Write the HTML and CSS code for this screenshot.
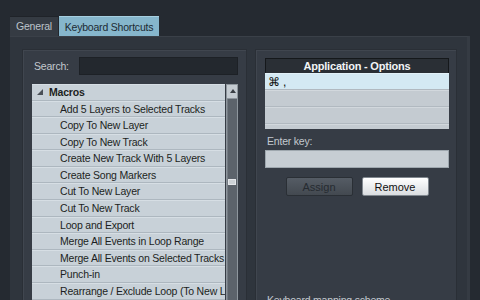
FILE: index.html
```html
<!DOCTYPE html>
<html lang="en">
<head>
    <meta charset="UTF-8">
    <title>Keyboard Shortcuts</title>
    <link rel="stylesheet" href="styles.css">
</head>
<body>
    <div class="window">
        <div class="tabs">
            <div class="tab">General</div>
            <div class="tab active">Keyboard Shortcuts</div>
        </div>
        <div class="tab-panel">
            <!-- lista de comandos -->
            <div class="group commands">
                <div class="search-row">
                    <span class="label">Search:</span>
                    <div class="search-field"></div>
                </div>
                <div class="list-wrap">
                    <div class="list">
                        <div class="row folder"><span class="twisty"></span>Macros</div>
                        <div class="row">Add 5 Layers to Selected Tracks</div>
                        <div class="row">Copy To New Layer</div>
                        <div class="row">Copy To New Track</div>
                        <div class="row">Create New Track With 5 Layers</div>
                        <div class="row">Create Song Markers</div>
                        <div class="row">Cut To New Layer</div>
                        <div class="row">Cut To New Track</div>
                        <div class="row">Loop and Export</div>
                        <div class="row">Merge All Events in Loop Range</div>
                        <div class="row">Merge All Events on Selected Tracks</div>
                        <div class="row">Punch-in</div>
                        <div class="row">Rearrange / Exclude Loop (To New Layer)</div>
                    </div>
                    <div class="scrollbar">
                        <div class="scroll-up"></div>
                        <div class="scroll-track"><div class="scroll-thumb"></div></div>
                    </div>
                </div>
            </div>
            <!-- atajos asignados -->
            <div class="group options">
                <div class="keys">
                    <div class="keys-head">Application - Options</div>
                    <div class="keys-body">
                        <div class="key-row selected">⌘ ,</div>
                        <div class="key-row"></div>
                        <div class="key-row"></div>
                        <div class="key-row"></div>
                    </div>
                </div>
                <div class="label enter-label">Enter key:</div>
                <div class="key-field"></div>
                <div class="buttons">
                    <button class="btn disabled">Assign</button>
                    <button class="btn">Remove</button>
                </div>
                <div class="label scheme-label">Keyboard mapping scheme</div>
            </div>
        </div>
    </div>
</body>
</html>
```

FILE: styles.css
```css
body {
    margin: 0;
    width: 480px;
    height: 300px;
    overflow: hidden;
    background-color: #252a31;
    font-family: 'Liberation Sans', Arial, sans-serif;
    font-size: 10.5px;
    letter-spacing: -0.2px;
    color: #c3c9cf;
}

.window {
    padding: 16px 10px 0 10px;
}

/* pestañas */
.tabs {
    display: flex;
    align-items: flex-end;
    height: 20px;
    width: 149px;
    background-color: #1f2329;
}
.tab {
    width: 49px;
    height: 19px;
    line-height: 19px;
    text-align: center;
    white-space: nowrap;
    background-color: #353b43;
    color: #bcc3ca;
    border-right: 1px solid #23272d;
    box-sizing: border-box;
}
.tab.active {
    width: 100px;
    height: 20px;
    line-height: 20px;
    background-color: #86b6cc;
    color: #1c2a33;
    border-right: none;
    border-top: 1px solid #a6cfe0;
}

.tab-panel {
    display: flex;
    gap: 8px;
    width: 460px;
    height: 264px;
    padding: 12px 13px 0 12px;
    box-sizing: border-box;
    background-color: #2f353d;
    border-top: 1px solid #3a4048;
    border-right: 3px solid #353b43;
}

.group {
    background-color: #363c45;
    border: 1px solid #2a2f36;
    box-shadow: inset 1px 1px 0 #40464f;
    height: 260px;
    box-sizing: border-box;
}
.commands {
    width: 225px;
    padding: 7px 8px 0 9px;
}
.options {
    width: 202px;
    padding: 8px 7px 0 9px;
    display: flex;
    flex-direction: column;
}

.search-row {
    display: flex;
    align-items: center;
    gap: 10px;
    height: 18px;
    padding-left: 2px;
}
.search-field {
    flex: 1;
    height: 18px;
    background-color: #23282e;
    border: 1px solid #1d2126;
    box-sizing: border-box;
}

.list-wrap {
    display: flex;
    margin-top: 9px;
    gap: 1px;
}
.list {
    width: 193px;
    background-color: #c8d1d8;
}
.row {
    height: 16.58px;
    line-height: 15px;
    box-sizing: border-box;
    border-bottom: 1px solid #adb7bf;
    border-top: 1px solid #d6dee4;
    padding-left: 28px;
    color: #1c1f22;
    white-space: nowrap;
    overflow: hidden;
}
.row.folder {
    padding-left: 5px;
    font-weight: bold;
    display: flex;
    align-items: center;
}
.twisty {
    width: 0;
    height: 0;
    border-left: 6px solid transparent;
    border-bottom: 6px solid #4a5057;
    margin-right: 6px;
}

.scrollbar {
    width: 13px;
    display: flex;
    flex-direction: column;
    border: 1px solid #8e969d;
    box-sizing: border-box;
    height: 220px;
}
.scroll-up {
    height: 13px;
    background-color: #c4cbd1;
    border-bottom: 1px solid #8e969d;
    position: relative;
}
.scroll-up::after {
    content: '';
    position: absolute;
    left: 3px;
    top: 4px;
    border-left: 3px solid transparent;
    border-right: 3px solid transparent;
    border-bottom: 4px solid #3a3f45;
}
.scroll-track {
    flex: 1;
    background-color: #5c636b;
    border-left: 1px solid #747b83;
    padding-top: 80px;
}
.scroll-thumb {
    width: 8px;
    height: 6px;
    background-color: #cdd2d6;
    border: 1px solid #e4e7ea;
    box-sizing: border-box;
}

/* tabla de atajos */
.keys {
    width: 184px;
}
.keys-head {
    height: 14px;
    line-height: 14px;
    background-color: #2a2f35;
    border: 1px solid #15181b;
    border-bottom: none;
    color: #f2f4f6;
    font-weight: bold;
    font-size: 11px;
    text-align: center;
}
.keys-body {
    height: 56px;
    overflow: hidden;
    background-color: #c4cbd1;
}
.key-row {
    height: 17px;
    line-height: 16px;
    box-sizing: border-box;
    border-bottom: 1px solid #b1b9c0;
    border-top: 1px solid #d2d8dd;
    padding-left: 3px;
    color: #111;
    font-size: 12px;
}
.key-row.selected {
    background-color: #d4e9f3;
    border-top-color: #e2f1f8;
}

.enter-label {
    margin-top: 6px;
    padding-left: 2px;
    height: 13px;
    line-height: 13px;
}
.key-field {
    width: 184px;
    height: 18px;
    margin-top: 2px;
    background-color: #c6cdd3;
    border: 1px solid #9ea7ae;
    box-sizing: border-box;
}

.buttons {
    display: flex;
    justify-content: center;
    gap: 9px;
    width: 184px;
    margin-top: 9px;
}
.btn {
    width: 67px;
    height: 19px;
    padding: 0;
    font-family: 'Liberation Sans', Arial, sans-serif;
    font-size: 11px;
    color: #111;
    background: linear-gradient(#ffffff, #dadde0);
    border: 1px solid #80878e;
    border-radius: 2px;
}
.btn.disabled {
    color: #262b31;
    background: linear-gradient(#555c65, #434950);
    border-color: #2a2f35;
}

.scheme-label {
    margin-top: auto;
    margin-bottom: 1px;
    padding-left: 2px;
    line-height: 13px;
}
```
